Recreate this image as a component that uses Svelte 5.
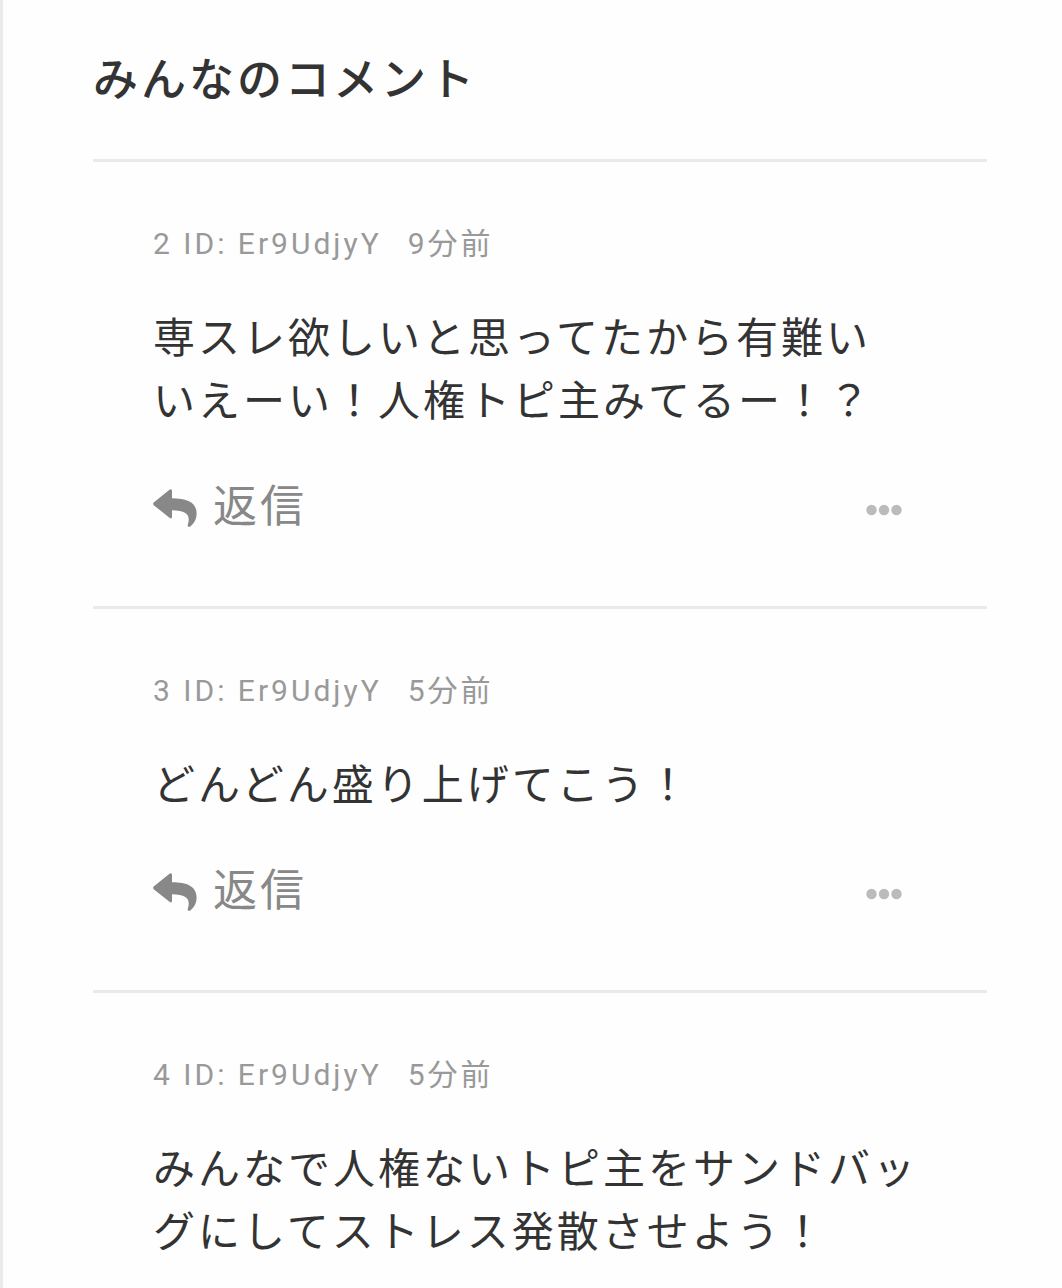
<script lang="ts">
  type Comment = {
    no: number;
    userId: string;
    posted: string;
    body: string;
    actions: boolean;
  };

  const comments: Comment[] = [
    {
      no: 2,
      userId: 'Er9UdjyY',
      posted: '9分前',
      body: '専スレ欲しいと思ってたから有難い\nいえーい！人権トピ主みてるー！？',
      actions: true
    },
    { no: 3, userId: 'Er9UdjyY', posted: '5分前', body: 'どんどん盛り上げてこう！', actions: true },
    {
      no: 4,
      userId: 'Er9UdjyY',
      posted: '5分前',
      body: 'みんなで人権ないトピ主をサンドバッグにしてストレス発散させよう！',
      actions: false
    }
  ];
</script>

<main class="page">
  <h1 class="heading">みんなのコメント</h1>
  {#each comments as comment (comment.no)}
    <article class="comment">
      <header class="meta">
        <span>{comment.no} ID: {comment.userId}</span>
        <time>{comment.posted}</time>
      </header>
      <p class="body">{comment.body}</p>
      {#if comment.actions}
        <footer class="actions">
          <button class="reply" type="button">
            <svg class="reply-icon" viewBox="0 0 44 40" aria-hidden="true">
              <path
                d="M1 14.2 16.8 1.6Q19 .2 19 3V10.2C34 10.2 43.6 14.2 43.6 25.5C43.6 31 41 35.5 37.6 38.2C36 39.3 34.2 38.6 34.8 36.8C37.6 27.5 34.5 22.4 19 22.2V28.6Q19 31.4 16.8 30L1 17.4Q-.8 15.8 1 14.2Z"
              />
            </svg>
            <span>返信</span>
          </button>
          <button class="more" type="button" aria-label="メニュー">
            <svg class="more-icon" viewBox="0 0 36 12" aria-hidden="true">
              <circle cx="5.5" cy="6" r="5.2" />
              <circle cx="18" cy="6" r="5.2" />
              <circle cx="30.5" cy="6" r="5.2" />
            </svg>
          </button>
        </footer>
      {/if}
    </article>
  {/each}
</main>

<style>
  :global(body) {
    margin: 0;
    background: #fefefe;
  }

  .page {
    box-sizing: border-box;
    min-height: 100vh;
    padding: 49px 75px 0 90px;
    border-left: 3px solid #eaeaea;
    color: #333;
    font-family: Roboto, 'Noto Sans CJK JP', sans-serif;
    font-size: 42px;
    line-height: 63px;
    letter-spacing: 3px;
  }

  .heading {
    margin: 0 0 47px;
    font-size: 45px;
    font-weight: 500;
  }

  .comment {
    padding: 59px 60px 60px;
    border-top: 3px solid #eaeaea;
  }

  .comment:last-child {
    padding-bottom: 23px;
  }

  .meta {
    display: flex;
    gap: 26px;
    margin-bottom: 41px;
    color: #999;
    font-size: 30px;
    line-height: 45px;
  }

  .body {
    margin: 0;
    white-space: pre-wrap;
    line-break: anywhere;
  }

  .actions {
    display: flex;
    align-items: center;
    justify-content: space-between;
    margin-top: 43px;
    padding-bottom: 7px;
  }

  .reply,
  .more {
    display: flex;
    align-items: center;
    border: none;
    background: none;
    font: inherit;
    letter-spacing: inherit;
    cursor: pointer;
  }

  .reply {
    gap: 16px;
    padding: 0;
    color: #888;
    font-size: 44px;
  }

  .more {
    padding: 19px 25px 15px;
    color: #bbb;
  }

  .reply-icon {
    width: 44px;
    height: 40px;
    fill: currentColor;
  }

  .more-icon {
    width: 36px;
    height: 12px;
    fill: currentColor;
  }
</style>
